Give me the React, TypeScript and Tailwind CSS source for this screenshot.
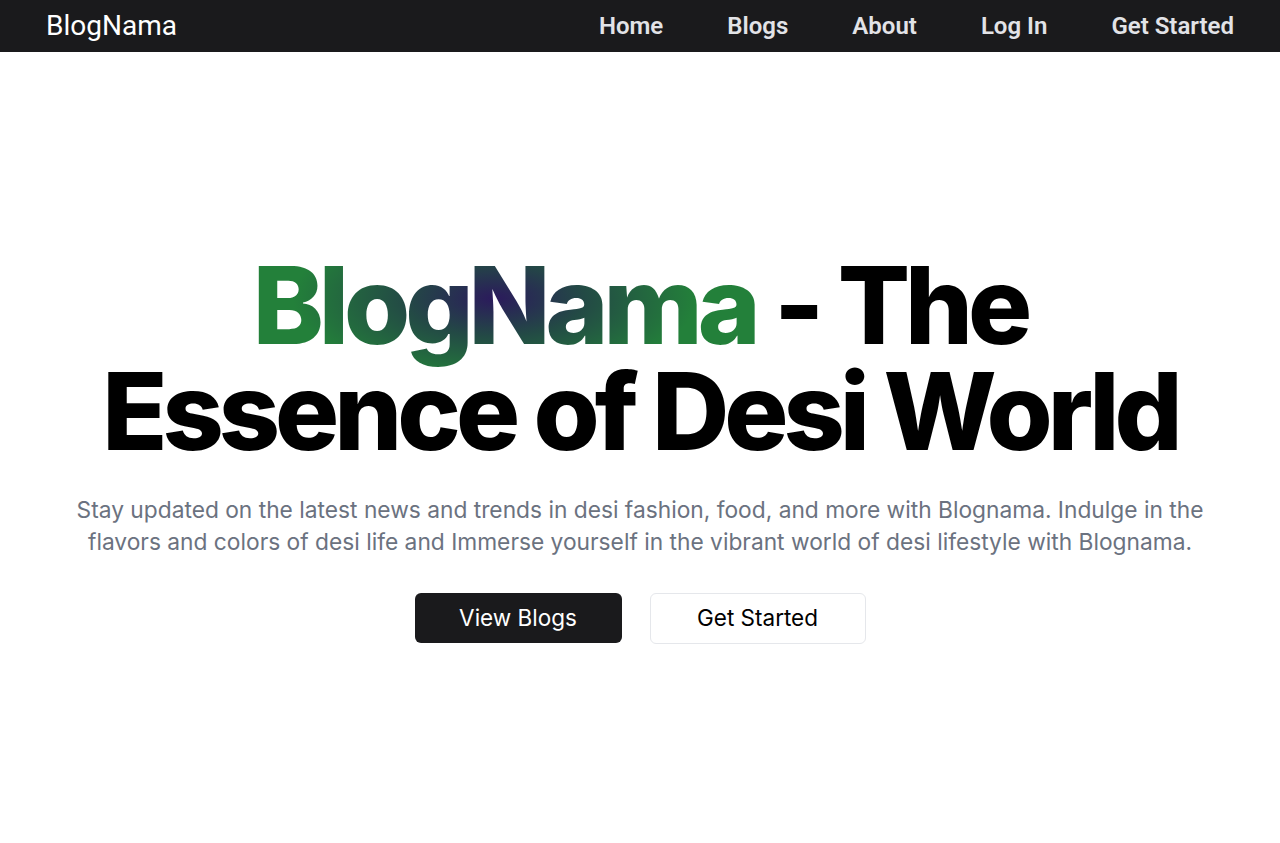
import React from "react";

const links = ["Home", "Blogs", "About", "Log In", "Get Started"];

const App = () => {
    return (
        <div className="min-h-screen bg-white font-['Inter',sans-serif]">
            <nav className="h-[52px] bg-[#1a1a1c] flex items-center justify-between px-[46px]">
                <span className="text-[28px] text-white font-['Roboto',sans-serif] leading-none">
                    BlogNama
                </span>
                <ul className="flex items-center gap-[64px] font-['Roboto',sans-serif]">
                    {links.map((l) => (
                        <li
                            key={l}
                            className="text-[24px] font-semibold text-[#e2e3e7] leading-none"
                        >
                            {l}
                        </li>
                    ))}
                </ul>
            </nav>

            <main className="h-[791px] flex flex-col items-center justify-center text-center">
                <h1 className="text-[107px] font-extrabold leading-[106px] tracking-[-0.047em] text-black">
                    <span className="bg-[radial-gradient(ellipse_40%_65%_at_48%_45%,#2b1a5c_0%,#234a45_45%,#23803a_100%)] bg-clip-text text-transparent">
                        BlogNama
                    </span>{" "}
                    - The
                    <br />
                    Essence of Desi World
                </h1>
                <p className="mt-[30px] text-[22.75px] leading-[32px] text-[#6b7280] max-w-[1140px]">
                    Stay updated on the latest news and trends in desi fashion,
                    food, and more with Blognama. Indulge in the flavors and
                    colors of desi life and Immerse yourself in the vibrant
                    world of desi lifestyle with Blognama.
                </p>
                <div className="mt-[35px] flex gap-[28px]">
                    <button className="w-[207px] h-[50px] rounded-md bg-[#1a1a1c] text-white text-[22.5px]">
                        View Blogs
                    </button>
                    <button className="w-[216px] h-[51px] rounded-md border border-gray-200 bg-white text-black text-[22.5px]">
                        Get Started
                    </button>
                </div>
            </main>
        </div>
    );
};

export default App;
